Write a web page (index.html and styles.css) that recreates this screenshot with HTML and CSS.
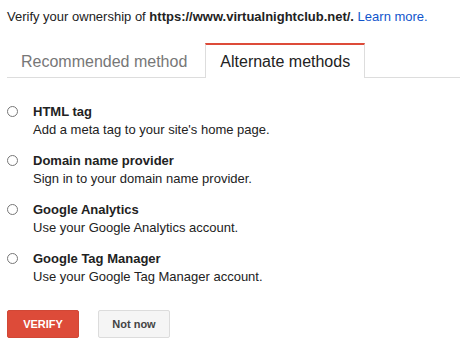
FILE: index.html
```html
<!DOCTYPE html>
<html lang="en">
<head>
  <meta charset="UTF-8" />
  <title>Verify ownership</title>
  <link rel="stylesheet" href="styles.css">
</head>
<body>

  <p class="intro">Verify your ownership of <strong>https://www.virtualnightclub.net/.</strong> <a href="#">Learn more.</a></p>

  <div class="tabs">
    <div class="tab">Recommended method</div>
    <div class="tab active">Alternate methods</div>
  </div>

  <div class="methods">
    <label class="method">
      <span class="radio"></span>
      <span class="method-info">
        <strong>HTML tag</strong>
        <span>Add a meta tag to your site's home page.</span>
      </span>
    </label>
    <label class="method">
      <span class="radio"></span>
      <span class="method-info">
        <strong>Domain name provider</strong>
        <span>Sign in to your domain name provider.</span>
      </span>
    </label>
    <label class="method">
      <span class="radio"></span>
      <span class="method-info">
        <strong>Google Analytics</strong>
        <span>Use your Google Analytics account.</span>
      </span>
    </label>
    <label class="method">
      <span class="radio"></span>
      <span class="method-info">
        <strong>Google Tag Manager</strong>
        <span>Use your Google Tag Manager account.</span>
      </span>
    </label>
  </div>

  <div class="actions">
    <button class="btn verify">VERIFY</button>
    <button class="btn later">Not now</button>
  </div>

</body>
</html>
```

FILE: styles.css
```css
* { box-sizing: border-box; margin: 0; padding: 0; font-family: 'Liberation Sans', Arial, sans-serif; }
body {
  background-color: #fff;
  color: #222;
  padding: 0 0 0 7px;
  font-size: 13px;
}

.intro {
  padding-top: 8px;
  line-height: 17px;
}

.intro a {
  color: #1155cc;
  text-decoration: none;
}

.tabs {
  display: flex;
  margin-top: 18px;
  border-bottom: 1px solid #ddd;
  height: 35px;
}

.tab {
  padding: 10px 14px 0;
  font-size: 16px;
  color: #777;
  margin-right: 4px;
}

.tab.active {
  color: #222;
  background-color: #fff;
  border: 1px solid #ddd;
  border-top: 2px solid #dd4b39;
  border-bottom: none;
  height: 35px;
  padding-top: 8px;
}

.methods {
  padding-top: 25px;
}

.method {
  display: flex;
  gap: 15px;
  margin-bottom: 13px;
  line-height: 18px;
}

.radio {
  width: 11px;
  height: 11px;
  margin-top: 3px;
  border: 1px solid #777;
  border-radius: 50%;
  flex-shrink: 0;
}

.method-info { display: flex; flex-direction: column; }

.method-info strong { color: #222; }

.actions {
  display: flex;
  gap: 19px;
  margin-top: 24px;
}

.btn {
  width: 72px;
  height: 28px;
  border-radius: 2px;
  font-size: 11px;
  font-weight: bold;
  cursor: pointer;
}

.verify {
  background-color: #dd4b39;
  border: 1px solid #d14836;
  color: #fff;
}

.later {
  background-color: #f5f5f5;
  border: 1px solid #dcdcdc;
  color: #444;
}
```
